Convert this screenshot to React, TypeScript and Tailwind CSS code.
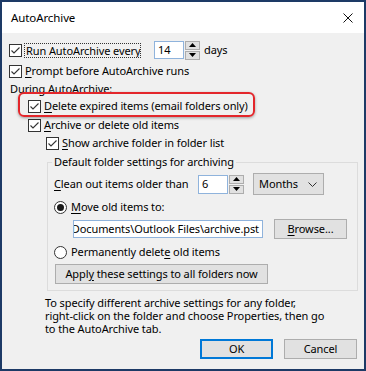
import React from "react";

const font = { fontFamily: '"Noto Sans", "Open Sans", sans-serif' };

function U({ children }: { children: React.ReactNode }) {
  return <span className="underline underline-offset-[2px] decoration-[1px]">{children}</span>;
}

function Check() {
  return (
    <svg width="13" height="13" viewBox="0 0 13 13" className="shrink-0">
      <rect x="0.5" y="0.5" width="12" height="12" fill="#ffffff" stroke="#333333" />
      <path d="M2.5 6.5 L5 9 L10.5 3.5" fill="none" stroke="#333333" strokeWidth="1.1" />
    </svg>
  );
}

function Radio({ on }: { on?: boolean }) {
  return (
    <svg width="13" height="13" viewBox="0 0 13 13" className="shrink-0">
      <circle cx="6.5" cy="6.5" r="6" fill="#ffffff" stroke="#333333" />
      {on && <circle cx="6.5" cy="6.5" r="3.5" fill="#1a1a1a" />}
    </svg>
  );
}

function Spin() {
  return (
    <div className="flex flex-col gap-[1px] ml-[1px] shrink-0">
      <div className="w-[15px] h-[9px] bg-[#e1e1e1] border border-[#adadad] flex items-center justify-center">
        <svg width="7" height="4" viewBox="0 0 7 4"><path d="M0 4 L3.5 0 L7 4 Z" fill="#000" /></svg>
      </div>
      <div className="w-[15px] h-[9px] bg-[#e1e1e1] border border-[#adadad] flex items-center justify-center">
        <svg width="7" height="4" viewBox="0 0 7 4"><path d="M0 0 L3.5 4 L7 0 Z" fill="#000" /></svg>
      </div>
    </div>
  );
}

function Btn({ children, className = "" }: { children: React.ReactNode; className?: string }) {
  return (
    <div className={"bg-[#e1e1e1] border border-[#adadad] flex items-center justify-center shrink-0 whitespace-nowrap " + className}>
      {children}
    </div>
  );
}

export default function App() {
  return (
    <div
      className="w-[366px] h-[371px] border-2 border-[#1d3a66] bg-[#f0f0f0] flex flex-col text-[11px] tracking-[-0.1px] text-black overflow-hidden whitespace-nowrap"
      style={font}
    >
      {/* title bar */}
      <div className="h-[31px] bg-white flex items-center justify-between pl-[9px] pr-[11px] shrink-0">
        <span className="text-[11.5px]">AutoArchive</span>
        <svg width="10" height="10" viewBox="0 0 10 10">
          <path d="M0.5 0.5 L9.5 9.5 M9.5 0.5 L0.5 9.5" stroke="#111" strokeWidth="1" />
        </svg>
      </div>

      <div className="flex flex-col pl-[7px] pr-[7px]">
        {/* row 1 */}
        <div className="mt-[8px] h-[18px] flex items-center">
          <Check />
          <span className="ml-[2px] w-[117px] h-[15px] pl-[1px] border border-dotted border-[#333] leading-[13px] shrink-0 overflow-hidden">
            <U>R</U>un AutoArchive every
          </span>
          <div className="ml-[13px] w-[30px] h-[18px] bg-white border border-[#8fb3dc] flex items-center pl-[3px] shrink-0">14</div>
          <Spin />
          <span className="ml-[4px]">days</span>
        </div>

        {/* row 2 */}
        <div className="mt-[5px] h-[14px] flex items-center">
          <Check />
          <span className="ml-[3px]"><U>P</U>rompt before AutoArchive runs</span>
        </div>

        <div className="mt-[4px] h-[14px] flex items-center pl-[1px]">During AutoArchive:</div>

        {/* delete row */}
        <div className="mt-[3px] h-[14px] flex items-center pl-[19px]">
          <div className="relative flex items-center">
            <div className="absolute left-[-10px] top-[-6px] w-[237px] h-[25px] border-2 border-[#e3262b] rounded-[6px] shadow-[0_1px_3px_rgba(0,0,0,0.35)] pointer-events-none" />
            <Check />
            <span className="ml-[3px]"><U>D</U>elete expired items (email folders only)</span>
          </div>
        </div>

        <div className="mt-[5px] h-[14px] flex items-center pl-[19px]">
          <Check />
          <span className="ml-[3px]"><U>A</U>rchive or delete old items</span>
        </div>

        <div className="mt-[4px] h-[14px] flex items-center pl-[37px]">
          <Check />
          <span className="ml-[3px]"><U>S</U>how archive folder in folder list</span>
        </div>

        {/* group */}
        <fieldset className="mt-[5px] ml-[38px] mr-[-1px] border border-[#dcdcdc] p-0 min-w-0">
          <legend className="ml-[4px] px-[2px] h-[14px] leading-[14px]">Default folder settings for archiving</legend>

          <div className="flex flex-col px-[6px] pb-[6px]">
            <div className="mt-[4px] h-[22px] flex items-center">
              <span className="w-[144px] shrink-0"><U>C</U>lean out items older than</span>
              <div className="w-[30px] h-[19px] bg-white border border-[#8fb3dc] flex items-center pl-[3px] shrink-0">6</div>
              <Spin />
              <Btn className="ml-[9px] w-[71px] h-[22px] !justify-between pl-[5px] pr-[6px]">
                <span>Months</span>
                <svg width="9" height="5" viewBox="0 0 9 5"><path d="M0.5 0.5 L4.5 4.5 L8.5 0.5" fill="none" stroke="#333" strokeWidth="1" /></svg>
              </Btn>
            </div>

            <div className="mt-[5px] h-[14px] flex items-center">
              <Radio on />
              <span className="ml-[4px]"><U>M</U>ove old items to:</span>
            </div>

            <div className="mt-[5px] h-[20px] flex items-center pl-[19px]">
              <div className="w-[190px] h-[18px] bg-white border border-[#8fb3dc] flex items-center justify-end overflow-hidden pr-[3px] whitespace-nowrap shrink-0">
                <span className="shrink-0">Documents\Outlook Files\archive.pst</span>
              </div>
              <Btn className="ml-[11px] w-[73px] h-[20px]">
                <span><U>B</U>rowse...</span>
              </Btn>
            </div>

            <div className="mt-[6px] h-[14px] flex items-center">
              <Radio />
              <span className="ml-[4px]">Permanently delet<U>e</U> old items</span>
            </div>

            <Btn className="mt-[5px] w-[213px] h-[20px] ml-[1px]">
              <span>Appl<U>y</U> these settings to all folders now</span>
            </Btn>
          </div>
        </fieldset>

        <div className="mt-[5px] ml-[36px] flex flex-col">
          <div className="h-[13px] leading-[13px]">To specify different archive settings for any folder,</div>
          <div className="h-[13px] leading-[13px]">right-click on the folder and choose Properties, then go</div>
          <div className="h-[13px] leading-[13px]">to the AutoArchive tab.</div>
        </div>

        <div className="mt-[4px] flex justify-end gap-[11px]">
          <div className="w-[73px] h-[20px] bg-[#e1e1e1] border-2 border-[#0078d7] flex items-center justify-center">OK</div>
          <Btn className="w-[73px] h-[20px]">Cancel</Btn>
        </div>
      </div>
    </div>
  );
}
